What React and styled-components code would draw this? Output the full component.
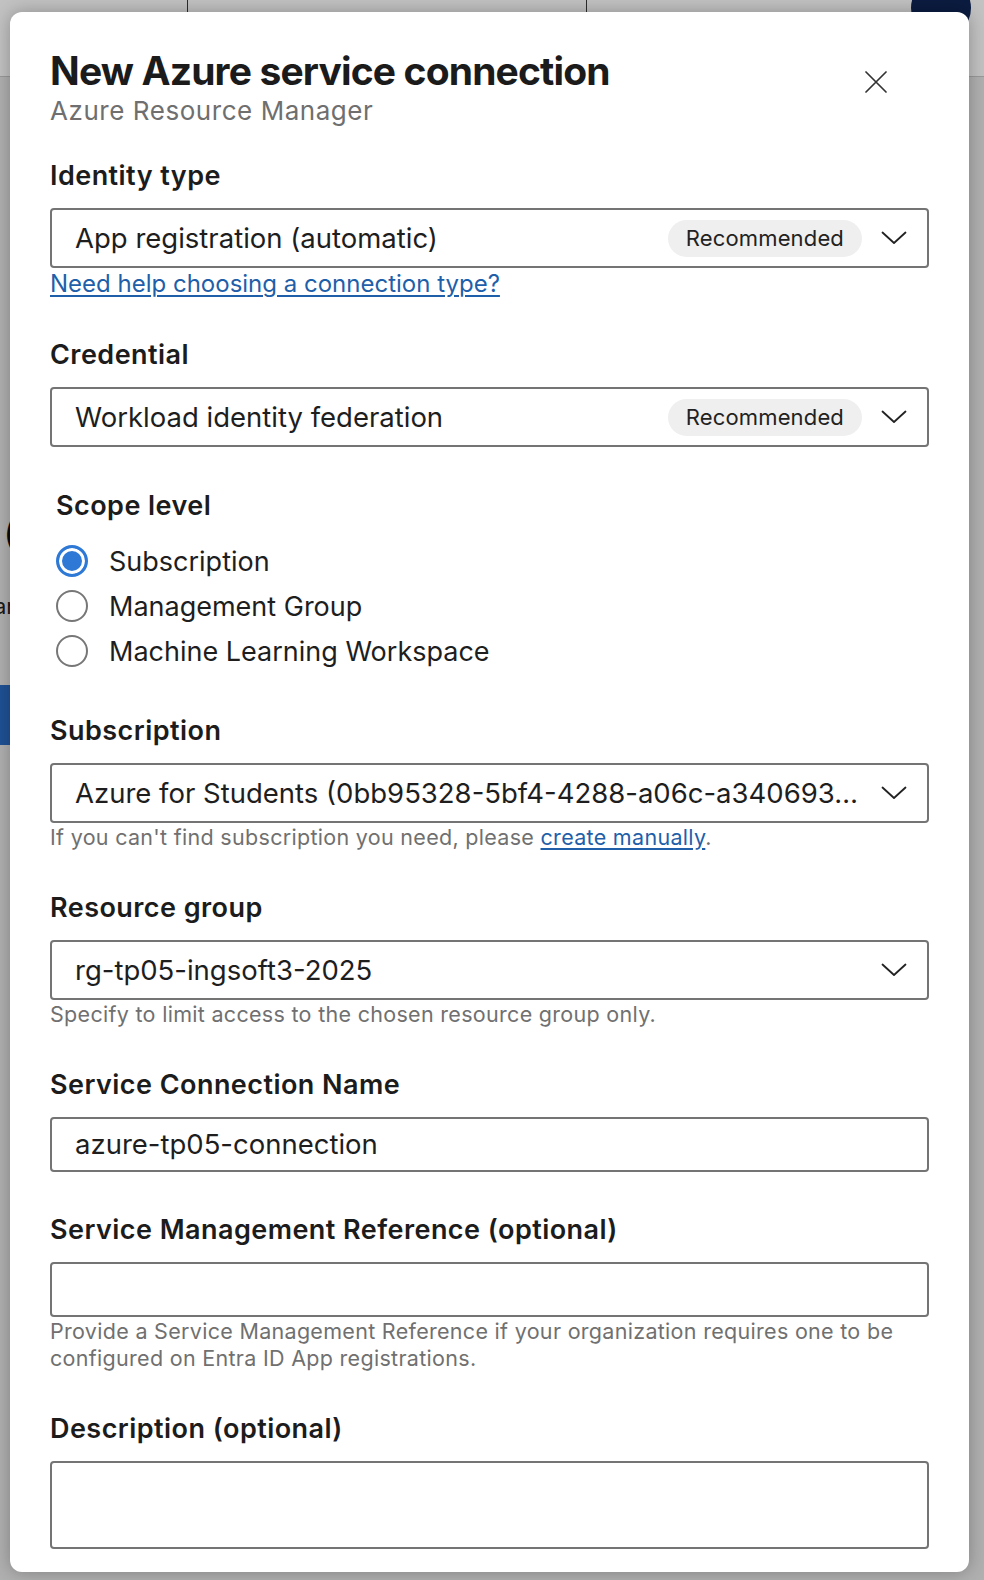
import React from "react";
import styled, { createGlobalStyle } from "styled-components";

const Global = createGlobalStyle`
  html, body { margin: 0; padding: 0; }
  body {
    width: 984px;
    height: 1580px;
    overflow: hidden;
    font-family: Inter, "Noto Sans", "Liberation Sans", sans-serif;
    background: #e6e6e6;
  }
  #root { position: relative; width: 984px; height: 1580px; }
`;

/* ---------- background page (dimmed by overlay) ---------- */
const Page = styled.div`
  width: 984px;
  height: 1580px;
  display: flex;
  flex-direction: column;
  background: #e8e8e8;
`;

const TopBar = styled.header`
  height: 76px;
  flex: none;
  display: flex;
  align-items: flex-start;
  background: #ffffff;
  border-bottom: 1px solid #c9c9c9;
`;

const TopCell = styled.div`
  width: ${(p) => p.$w}px;
  height: 76px;
  flex: none;
  border-right: ${(p) => (p.$divider ? "1.5px solid #3a3a3a" : "none")};
`;

const Avatar = styled.div`
  width: 60px;
  height: 60px;
  margin-top: -22px;
  margin-left: 324px;
  border-radius: 50%;
  background: #0f2656;
  flex: none;
`;

const PageBody = styled.div`
  display: flex;
  flex-direction: column;
  align-items: flex-start;
  padding-top: 436px;
`;

const BgHeading = styled.div`
  font-size: 34px;
  font-weight: 600;
  color: #111;
  margin-left: 4px;
  white-space: nowrap;
  line-height: 40px;
`;

const BgText = styled.div`
  margin-top: 40px;
  margin-left: -6px;
  font-size: 22px;
  color: #222;
  white-space: nowrap;
`;

const BgButton = styled.div`
  margin-top: 66px;
  margin-left: -14px;
  height: 60px;
  padding: 0 24px;
  display: flex;
  align-items: center;
  background: #2a6bc4;
  color: #fff;
  font-size: 22px;
  font-weight: 600;
  white-space: nowrap;
`;

const Overlay = styled.div`
  position: absolute;
  inset: 0;
  background: rgba(0, 0, 0, 0.24);
  padding: 12px 15px 0 10px;
  box-sizing: border-box;
`;

/* ---------- modal ---------- */
const Modal = styled.section`
  width: 959px;
  height: 1560px;
  box-sizing: border-box;
  background: #ffffff;
  border-radius: 12px;
  box-shadow: 0 0 18px rgba(0, 0, 0, 0.28);
  padding: 35.5px 40px 0 40px;
  display: flex;
  flex-direction: column;
  overflow: hidden;
`;

const Header = styled.div`
  display: flex;
  justify-content: space-between;
  align-items: flex-start;
  margin-bottom: 33.5px;
`;

const TitleBlock = styled.div`
  display: flex;
  flex-direction: column;
`;

const Title = styled.h1`
  margin: 0;
  font-size: 39px;
  line-height: 46px;
  font-weight: 700;
  letter-spacing: -0.85px;
  color: #1b1b1b;
`;

const Subtitle = styled.div`
  margin-top: 1px;
  font-size: 26px;
  line-height: 32px;
  color: #6f6f6f;
  letter-spacing: 0.55px;
`;

const CloseButton = styled.button`
  margin-top: 23px;
  margin-right: 42px;
  width: 22px;
  height: 22px;
  padding: 0;
  border: none;
  background: transparent;
  display: flex;
  cursor: pointer;
`;

const Group = styled.div`
  display: flex;
  flex-direction: column;
  margin-top: ${(p) => (p.$first ? 0 : p.$gap || 41)}px;
`;

const Label = styled.label`
  font-size: 27px;
  line-height: 32px;
  font-weight: 600;
  letter-spacing: 0.45px;
  color: #1c1c1c;
  margin-bottom: 16px;
  padding-left: ${(p) => (p.$indent ? 6 : 0)}px;
`;

const Box = styled.div`
  height: ${(p) => p.$h || 60}px;
  box-sizing: border-box;
  border: 2px solid #747474;
  border-radius: 4px;
  display: flex;
  align-items: center;
  padding: 0 20px 0 23px;
  background: #fff;
`;

const Value = styled.span`
  flex: 1;
  min-width: 0;
  font-size: 27.5px;
  color: #1e1e1e;
  white-space: nowrap;
  overflow: hidden;
  text-overflow: ellipsis;
`;

const Pill = styled.span`
  flex: none;
  height: 37px;
  padding: 0 18px;
  border-radius: 19px;
  background: #efefef;
  display: flex;
  align-items: center;
  font-size: 22px;
  letter-spacing: 0.15px;
  color: #222;
  margin-left: 16px;
`;

const ChevronWrap = styled.span`
  flex: none;
  display: flex;
  margin-left: 19px;
`;

const HelpLink = styled.a`
  margin-top: 2px;
  font-size: 24px;
  line-height: 28px;
  color: #1f5fa9;
  text-decoration: underline;
  text-underline-offset: 3px;
  text-decoration-thickness: 1.5px;
  align-self: flex-start;
`;

const Helper = styled.div`
  margin-top: 1.5px;
  font-size: 21.5px;
  line-height: 26.5px;
  color: #707070;
  letter-spacing: 0.3px;
`;

const InlineLink = styled.a`
  color: #1f5fa9;
  text-decoration: underline;
  text-underline-offset: 3px;
`;

const RadioList = styled.div`
  display: flex;
  flex-direction: column;
  padding-left: 6px;
  margin-top: 0.5px;
`;

const RadioRow = styled.label`
  height: 45px;
  display: flex;
  align-items: center;
  gap: 21px;
  font-size: 27px;
  color: #1e1e1e;
`;

const RadioCircle = styled.span`
  width: 32px;
  height: 32px;
  box-sizing: border-box;
  border-radius: 50%;
  flex: none;
  border: ${(p) => (p.$checked ? "3px solid #2f79d6" : "2px solid #777")};
  background: ${(p) => (p.$checked ? "#2f79d6" : "#fff")};
  box-shadow: ${(p) => (p.$checked ? "inset 0 0 0 3px #fff" : "none")};
`;

const Chevron = () => (
  <ChevronWrap>
    <svg width="26" height="14" viewBox="0 0 26 14" fill="none">
      <path d="M1.5 1.5 L13 12 L24.5 1.5" stroke="#222" strokeWidth="1.8" strokeLinecap="round" strokeLinejoin="round" />
    </svg>
  </ChevronWrap>
);

const Select = ({ value, recommended }) => (
  <Box>
    <Value>{value}</Value>
    {recommended && <Pill>Recommended</Pill>}
    <Chevron />
  </Box>
);

const scopes = [
  { label: "Subscription", checked: true },
  { label: "Management Group" },
  { label: "Machine Learning Workspace" },
];

export default function App() {
  return (
    <>
      <Global />
      <Page>
        <TopBar>
          <TopCell $w={187} $divider />
          <TopCell $w={398} $divider />
          <Avatar />
        </TopBar>
        <PageBody>
          <BgHeading>(</BgHeading>
          <BgText>ar</BgText>
          <BgButton>o</BgButton>
        </PageBody>
      </Page>
      <Overlay>
        <Modal>
          <Header>
            <TitleBlock>
              <Title>New Azure service connection</Title>
              <Subtitle>Azure Resource Manager</Subtitle>
            </TitleBlock>
            <CloseButton aria-label="Close">
              <svg width="22" height="22" viewBox="0 0 22 22" fill="none">
                <path d="M1 1 L21 21 M21 1 L1 21" stroke="#333" strokeWidth="1.7" strokeLinecap="round" />
              </svg>
            </CloseButton>
          </Header>

          <Group $first>
            <Label>Identity type</Label>
            <Select value="App registration (automatic)" recommended />
            <HelpLink href="#">Need help choosing a connection type?</HelpLink>
          </Group>

          <Group>
            <Label>Credential</Label>
            <Select value="Workload identity federation" recommended />
          </Group>

          <Group $gap={43}>
            <Label $indent>Scope level</Label>
            <RadioList>
              {scopes.map((s) => (
                <RadioRow key={s.label}>
                  <RadioCircle $checked={s.checked} />
                  {s.label}
                </RadioRow>
              ))}
            </RadioList>
          </Group>

          <Group>
            <Label>Subscription</Label>
            <Select value="Azure for Students (0bb95328-5bf4-4288-a06c-a340693…" />
            <Helper>
              If you can't find subscription you need, please <InlineLink href="#">create manually</InlineLink>.
            </Helper>
          </Group>

          <Group>
            <Label>Resource group</Label>
            <Select value="rg-tp05-ingsoft3-2025" />
            <Helper>Specify to limit access to the chosen resource group only.</Helper>
          </Group>

          <Group>
            <Label>Service Connection Name</Label>
            <Box $h={55}>
              <Value>azure-tp05-connection</Value>
            </Box>
          </Group>

          <Group $gap={42}>
            <Label>Service Management Reference (optional)</Label>
            <Box $h={55} />
            <Helper>
              Provide a Service Management Reference if your organization requires one to be configured on Entra ID App registrations.
            </Helper>
          </Group>

          <Group $gap={42}>
            <Label>Description (optional)</Label>
            <Box $h={88} />
          </Group>
        </Modal>
      </Overlay>
    </>
  );
}
